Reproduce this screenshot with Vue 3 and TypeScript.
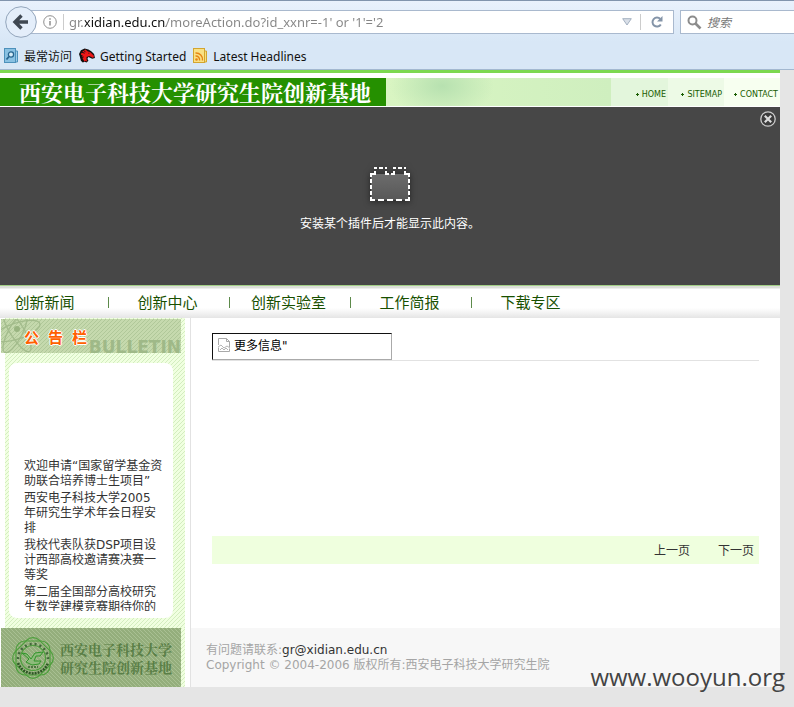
<script setup lang="ts">
import { ref } from 'vue'

interface NoticeItem {
  id: number
  lines: string[]
}

const address = ref("gr.xidian.edu.cn/moreAction.do?id_xxnr=-1' or '1'='2")
const query = ref('')
const heading = ref('更多信息"')

const shortcuts: string[] = ['HOME', 'SITEMAP', 'CONTACT']
const sections: string[] = ['创新新闻', '创新中心', '创新实验室', '工作简报', '下载专区']

const notices: NoticeItem[] = [
  { id: 1, lines: ['欢迎申请“国家留学基金资', '助联合培养博士生项目”'] },
  { id: 2, lines: ['西安电子科技大学2005', '年研究生学术年会日程安', '排'] },
  { id: 3, lines: ['我校代表队获DSP项目设', '计西部高校邀请赛决赛一', '等奖'] },
  { id: 4, lines: ['第二届全国部分高校研究', '生数学建模竞赛期待你的'] },
]
</script>

<template>
  <div class="window">
    <header class="chrome">
      <div class="toolbar">
        <button class="back" type="button" aria-label="后退">
          <svg width="32" height="32" viewBox="0 0 32 32">
            <circle cx="16" cy="16" r="15.3" fill="#e4eefa" stroke="#93a5bb" />
            <path d="M10.5 16H23M16.5 9.5 10 16l6.500 6.500" fill="none" stroke="#3f4852" stroke-width="3.400" />
          </svg>
        </button>
        <div class="address">
          <svg class="info" width="14" height="14" viewBox="0 0 14 14">
            <circle cx="7" cy="7" r="6.300" fill="none" stroke="#8f8f8f" />
            <path d="M7 6v4.500M7 3.200v1.600" stroke="#8f8f8f" stroke-width="1.500" />
          </svg>
          <span class="rule"></span>
          <input v-model="address" class="url" type="text" aria-label="地址" spellcheck="false" />
          <button class="plain" type="button" aria-label="历史">
            <svg width="10" height="8" viewBox="0 0 10 8">
              <path d="M.7.700h8.600L5 7z" fill="#d9dfe8" stroke="#a3b0c0" />
            </svg>
          </button>
          <span class="rule"></span>
          <button class="plain reload" type="button" aria-label="刷新">
            <svg width="14" height="14" viewBox="0 0 14 14">
              <path d="M10.800 9.500A4.500 4.500 0 1 1 10.300 4" fill="none" stroke="#8494a8" stroke-width="2" />
              <path d="M12.500 1v5.500H7z" fill="#8494a8" />
            </svg>
          </button>
        </div>
        <div class="search">
          <svg width="15" height="15" viewBox="0 0 15 15">
            <circle cx="5.500" cy="5.500" r="4" fill="none" stroke="#8c8c8c" stroke-width="2" />
            <path d="m8.500 8.500 5 5" stroke="#8c8c8c" stroke-width="2.600" />
          </svg>
          <input v-model="query" type="text" placeholder="搜索" aria-label="搜索" />
        </div>
      </div>
      <nav class="bookmarks" aria-label="书签">
        <a href="#">
          <svg width="15" height="16" viewBox="0 0 15 16">
            <path d="M11 3h2.500v11H11z" fill="#9fcde8" stroke="#4d91bb" />
            <rect x=".5" y=".5" width="11" height="14" fill="#89c1e2" stroke="#4d91bb" />
            <circle cx="7" cy="6.500" r="2.600" fill="#d5ecf8" stroke="#28658f" stroke-width="1.300" />
            <path d="m5 8.500-2.500 3" stroke="#28658f" stroke-width="1.800" />
          </svg>
          最常访问
        </a>
        <a href="#">
          <svg width="16" height="16" viewBox="0 0 17 16">
            <path d="M0 6 2 2l4-2 4 1 3 2 3 3 1 4-3 1-4-2-1 2 1 2-2 2-2-1-2 1-2-2-1-4z" fill="#111" />
            <path d="m2 6 2-3 3-2 2 2 3 1 4 4-1 2-4-2-3 1v3l1 2-2-1-1 1-2-3z" fill="#ee1717" />
            <path d="m1 7 3 1M3 4l3 1M2 10l3-1M5 2l2 2M10 5h1" stroke="#111" />
          </svg>
          Getting Started
        </a>
        <a href="#">
          <svg width="15" height="16" viewBox="0 0 15 16">
            <path d="M11 3h2.500v11H11z" fill="#f8df7d" stroke="#d3a52f" />
            <rect x=".5" y=".5" width="11" height="14" fill="#f9e184" stroke="#d3a52f" />
            <circle cx="3.500" cy="11.500" r="1.300" fill="#e68414" />
            <path d="M2.500 8a3.700 3.700 0 0 1 4 4.500M2.500 5a6.600 6.600 0 0 1 7 7.500" fill="none" stroke="#e68414" stroke-width="1.400" />
          </svg>
          Latest Headlines
        </a>
      </nav>
    </header>

    <div class="site">
      <div class="banner">
        <h1>西安电子科技大学研究生院创新基地</h1>
        <div class="scenery"></div>
        <a v-for="item in shortcuts" :key="item" href="#" class="shortcut">
          <svg width="3" height="3" viewBox="0 0 3 3"><path d="M1 0h1v1h1v1H2v1H1V2H0V1h1z" fill="#185c00" /></svg>
          {{ item }}
        </a>
      </div>

      <section class="plugin">
        <button class="close" type="button" aria-label="关闭">
          <svg width="16" height="16" viewBox="0 0 16 16">
            <circle cx="8" cy="8" r="7.200" fill="#3c3c3c" stroke="#ccc" stroke-width="1.300" />
            <path d="m4.800 4.800 6.400 6.400m0-6.400-6.400 6.400" stroke="#ddd" stroke-width="2.200" />
          </svg>
        </button>
        <svg class="brick" width="42" height="37" viewBox="0 0 42 37">
          <defs>
            <linearGradient id="brick-fill" x1="0" y1="0" x2="0" y2="1">
              <stop offset="0" stop-color="#6c6c6c" />
              <stop offset="1" stop-color="#585858" />
            </linearGradient>
          </defs>
          <path d="M2 8h38v26H2z" fill="url(#brick-fill)" />
          <path
            d="M1 7h4V5h2v4H3v2H1zM41 11h-2V9h-4V5h2v2h4zM5 3V1h3v2zM10 1h4v2h-4zM16 1h2v2h-2zM16 5h2v2h2v2h-4zM24 1h3v2h-3zM29 1h4v2h-4zM35 1h2v2h-2zM24 5h2v4h-4V7h2zM1 13h2v4H1zM1 19h2v4H1zM1 25h2v4H1zM1 31h2v2h3v2H1zM39 13h2v4h-2zM39 19h2v4h-2zM39 25h2v4h-2zM39 31h2v4h-5v-2h3zM9 33h6v2H9zM18 33h6v2h-6zM27 33h6v2h-6z"
            fill="#fff"
          />
        </svg>
        <p>安装某个插件后才能显示此内容。</p>
      </section>

      <nav class="sections" aria-label="栏目">
        <a v-for="item in sections" :key="item" href="#">{{ item }}</a>
      </nav>

      <div class="columns">
        <aside class="side">
          <div class="board">
            <h2 class="board-title">
              <svg class="atom" width="40" height="34" viewBox="0 0 40 34">
                <g fill="none" stroke="#a3bc8c" stroke-width="1.300">
                  <ellipse cx="16" cy="12" rx="24" ry="8" transform="rotate(-18 16 12)" />
                  <ellipse cx="16" cy="12" rx="24" ry="7" transform="rotate(58 16 12)" />
                  <ellipse cx="14" cy="14" rx="22" ry="7" transform="rotate(118 14 14)" />
                </g>
                <circle cx="16" cy="10" r="3" fill="#98b480" />
              </svg>
              <span class="cn"><span>公</span><span>告</span><span>栏</span></span>
              <span class="en">BULLETIN</span>
            </h2>
            <div class="panel">
              <ul>
                <li v-for="notice in notices" :key="notice.id">
                  <a href="#"><span v-for="line in notice.lines" :key="line">{{ line }}</span></a>
                </li>
              </ul>
            </div>
          </div>
        </aside>

        <main class="content">
          <div class="heading">
            <svg width="14" height="15" viewBox="0 0 14 15">
              <path d="M1.500 7V.5h8l3 3V9M9.500.500v3h3M1.500 9.500v4h11v-3" fill="none" stroke="#a9a9a9" />
              <path d="m1 9 3-2 3 3 3-2 3 2M3 12l2-2 2 2 2-2 2 2" fill="none" stroke="#b5b5b5" />
            </svg>
            <input v-model="heading" type="text" aria-label="标题" />
          </div>
          <div class="pager">
            <a href="#">上一页</a>
            <a href="#">下一页</a>
          </div>
        </main>
      </div>

      <footer class="foot">
        <div class="side">
          <div class="board">
            <div class="stamp">
              <svg width="46" height="46" viewBox="0 0 46 46">
                <g fill="none" stroke="#4c9f3b" stroke-width="1.200">
                  <rect x="6" y="6" width="34" height="34" rx="9" />
                  <rect x="6" y="6" width="34" height="34" rx="9" transform="rotate(45 23 23)" />
                  <circle cx="23" cy="23" r="12.500" />
                </g>
                <path d="M8 24a15 15 0 1 1 30 0" fill="none" stroke="#42663a" stroke-width="2.500" stroke-dasharray="2 3" />
                <path d="M8 28a16 16 0 0 0 30 0" fill="none" stroke="#2d5724" stroke-width="2.600" stroke-dasharray="2 1" />
                <path d="m12 18 5 1 4 5 4-6 8-1-3 4h-4l-2 5h7l-2 3-7 1-6-3 3-3z" fill="#8ebb7b" stroke="#31962a" />
                <path d="M18 32h10" stroke="#35632b" stroke-width="1.600" stroke-dasharray="2 1" />
              </svg>
              <p><span>西安电子科技大学</span><span>研究生院创新基地</span></p>
            </div>
          </div>
        </div>
        <div class="legal">
          <p>有问题请联系:<a href="mailto:gr@xidian.edu.cn">gr@xidian.edu.cn</a></p>
          <p>Copyright © 2004-2006 版权所有:西安电子科技大学研究生院</p>
        </div>
      </footer>
    </div>
    <div class="watermark">www.wooyun.org</div>
  </div>
</template>

<style>
body {
  background: #e5e5e5;
}
</style>

<style scoped>
* {
  box-sizing: border-box;
}

.window {
  position: relative;
  min-height: 100vh;
  font-family: "DejaVu Sans", "Noto Sans CJK SC", sans-serif;
  font-size: 12px;
  line-height: 15px;
  color: #333;
}

h1,
h2,
p,
ul {
  margin: 0;
  padding: 0;
  list-style: none;
}

a {
  color: inherit;
  text-decoration: none;
}

button {
  display: flex;
  align-items: center;
  justify-content: center;
  padding: 0;
  border: 0;
  background: none;
}

input {
  min-width: 0;
  padding: 0;
  border: 0;
  outline: 0;
  background: none;
  font: inherit;
}

svg {
  display: block;
  flex: none;
}

.chrome {
  height: 70px;
  padding-top: 5px;
  border-top: 1px solid #8194ad;
  border-bottom: 1px solid #a3b8d0;
  background: linear-gradient(#e9f1fc, #d8e7f6 60%);
  font-family: "Noto Sans", "Noto Sans CJK SC", sans-serif;
}

.toolbar {
  display: flex;
  align-items: center;
  height: 32px;
}

.back {
  z-index: 1;
  margin-left: 5px;
}

.address,
.search {
  display: flex;
  align-items: center;
  min-width: 0;
  height: 24px;
  border: 1px solid #a9b9ce;
  background: #fff;
}

.address {
  flex: 1;
  gap: 6px;
  margin-left: -8px;
  padding-left: 13px;
}

.rule {
  width: 1px;
  height: 16px;
  background: #ccc;
}

.url {
  flex: 1;
  height: 20px;
  margin-left: -1px;
  background: linear-gradient(90deg, #858585 16px, #111 16px, #111 97px, #858585 97px);
  background-clip: text;
  color: transparent;
  font-size: 13px;
}

.plain {
  width: 14px;
  height: 20px;
}

.reload {
  width: 20px;
  margin-right: 6px;
}

.search {
  flex: 0 0 114px;
  gap: 5px;
  margin-left: 6px;
  padding-left: 6px;
  border-right: 0;
}

.search input {
  flex: 1;
}

.search input::placeholder {
  color: #777;
  font-style: italic;
  opacity: 1;
}

.bookmarks {
  display: flex;
  gap: 7px;
  padding: 10px 4px 0;
  color: #111;
}

.bookmarks a {
  display: flex;
  align-items: center;
  gap: 5px;
  height: 16px;
  white-space: nowrap;
}

.site {
  margin-right: 14px;
  border-top: 3px solid #7cd850;
  background: #fff;
}

.banner {
  display: flex;
  height: 29px;
  margin: 5px 0 0;
  border-bottom: 1px solid #fff;
}

h1 {
  flex: 0 0 386px;
  padding-left: 19px;
  background: #259000;
  color: #fff;
  font-family: "Noto Serif CJK SC", "Noto Sans CJK SC", serif;
  font-size: 22px;
  font-weight: 700;
  line-height: 28px;
  white-space: nowrap;
}

.scenery {
  flex: 1;
  background:
    radial-gradient(ellipse 52px 32px at 56px 8px, #b7e1b0, transparent),
    linear-gradient(90deg, #d9f5c2, #cfefbf);
}

.shortcut {
  display: flex;
  flex: 0 0 56px;
  align-items: center;
  justify-content: flex-end;
  gap: 3px;
  padding: 5px 2px 0 0;
  background: #edfae6;
  color: #185c00;
  font-size: 8px;
}

.shortcut:nth-of-type(1) {
  flex-basis: 57px;
  background: #e3f6dc;
}

.shortcut:nth-of-type(3) {
  background: #f7fff0;
}

.plugin {
  position: relative;
  display: flex;
  flex-direction: column;
  align-items: center;
  gap: 14px;
  min-height: 178px;
  padding-top: 59px;
  background: #474747;
  color: #fff;
}

.close {
  position: absolute;
  top: 4px;
  right: 4px;
}

.brick {
  filter: drop-shadow(0 1px 3px #222);
}

.sections {
  display: grid;
  grid-template-columns: 109px repeat(4, 121px);
  height: 33px;
  border-top: 1px solid #a2cf86;
  background: linear-gradient(#dcdfd9 0 2px, #fff 3px, #fff 22px, #e5e5e5);
  color: #185000;
  font-size: 15px;
}

.sections a {
  display: flex;
  align-items: center;
  justify-content: center;
  padding: 3px 4px 0 0;
  background: linear-gradient(#5d8a4b, #5d8a4b) right 11px / 1px 11px no-repeat;
  white-space: nowrap;
}

.sections a:first-child {
  padding-right: 20px;
}

.sections a:last-child {
  background: none;
}

.columns {
  display: flex;
  min-height: 310px;
}

.side {
  display: flex;
  flex: 0 0 191px;
  padding: 0 5px;
  border-right: 1px solid #e2e2e2;
}

.board {
  flex: 1;
  padding: 1px 12px 10px 4px;
  background: linear-gradient(135deg, #d3edbf 18%, #f0ffe0 18% 56%, #d3edbf 56% 68%, #f0ffe0 68%) 0 0 / 4px 4px;
}

.board-title {
  position: relative;
  display: flex;
  align-items: center;
  height: 34px;
  margin: 0 -8px 10px;
  background: linear-gradient(135deg, #b0c899 18%, #c5d9ad 18% 56%, #b0c899 56% 68%, #c5d9ad 68%) 0 0 / 4px 4px;
}

.atom {
  position: absolute;
  top: 0;
  left: 0;
}

.cn {
  position: relative;
  z-index: 1;
  display: flex;
  gap: 9px;
  padding: 4px 0 0 23px;
  color: #ff6000;
  font-size: 15px;
  font-weight: 700;
  line-height: 20px;
  text-shadow: 1px 0 #fff, -1px 0 #fff, 0 1px #fff, 0 -1px #fff;
}

.en {
  position: absolute;
  right: 0;
  bottom: -2px;
  color: #9fb988;
  font-size: 17px;
  font-weight: 700;
  line-height: 15px;
}

.panel {
  height: 255px;
  padding: 95px 0 7px 15px;
  border-radius: 8px;
  background: #fff;
}

.panel ul {
  height: 153px;
  overflow: hidden;
}

.panel li {
  padding-top: 1px;
  margin-bottom: 1px;
}

.panel span {
  display: block;
  height: 15px;
  white-space: nowrap;
}

.content {
  flex: 1;
  min-width: 0;
  padding: 15px 21px 0;
}

.heading {
  position: relative;
  height: 28px;
  border-bottom: 1px solid #e2e2e2;
}

.heading svg {
  position: absolute;
  top: 5px;
  left: 5px;
}

.heading input {
  width: 180px;
  height: 27px;
  padding: 0 4px 4px 21px;
  border: 1px solid #aaa;
  border-top-color: #111;
  border-left-color: #111;
  color: #000;
}

.pager {
  display: flex;
  align-items: center;
  justify-content: flex-end;
  gap: 28px;
  height: 28px;
  margin-top: 175px;
  padding: 2px 5px 0 0;
  background: #efffde;
}

.foot {
  display: flex;
  height: 59px;
  background: #f7f7f7;
}

.foot .side {
  background: #fff;
}

.foot .board {
  padding: 0 4px 0 0;
}

.stamp {
  display: flex;
  align-items: center;
  gap: 4px;
  height: 59px;
  margin-left: -4px;
  padding-left: 9px;
  background: linear-gradient(45deg, #a9c093 18%, #94ae7c 18% 56%, #a9c093 56% 68%, #94ae7c 68%) 0 0 / 4px 4px;
  color: #5a7f47;
  font-family: "Noto Serif CJK SC", "Noto Sans CJK SC", serif;
  font-size: 14px;
  font-weight: 700;
  line-height: 18px;
  white-space: nowrap;
}

.stamp p {
  padding-top: 1px;
}

.stamp span {
  display: block;
}

.legal {
  padding: 15px 15px 0;
  color: #a5a5a5;
  white-space: nowrap;
}

.legal a {
  color: #333;
}

.watermark {
  position: absolute;
  right: 9px;
  bottom: 13px;
  color: #444;
  font-family: "Open Sans", sans-serif;
  font-size: 24px;
  line-height: 34px;
}
</style>
